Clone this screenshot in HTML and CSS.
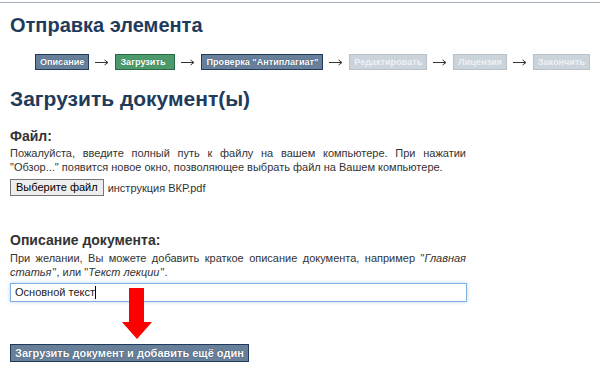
FILE: index.html
```html
<!DOCTYPE html>
<html lang="ru">
<head>
<meta charset="utf-8">
<title>Отправка элемента</title>
<link rel="stylesheet" href="styles.css">
</head>
<body>
<div class="topline"></div>
<div class="page">
  <h1 class="title">Отправка элемента</h1>
  <div class="steps">
    <span class="step step-done">Описание</span>
    <svg class="arrow" width="14" height="7" viewBox="0 0 14 7"><path d="M0 3.5H12.5M9.5 1L13 3.5L9.5 6" fill="none" stroke="#333" stroke-width="1"/></svg>
    <span class="step step-current">Загрузить</span>
    <svg class="arrow" width="14" height="7" viewBox="0 0 14 7"><path d="M0 3.5H12.5M9.5 1L13 3.5L9.5 6" fill="none" stroke="#333" stroke-width="1"/></svg>
    <span class="step step-done">Проверка "Антиплагиат"</span>
    <svg class="arrow" width="14" height="7" viewBox="0 0 14 7"><path d="M0 3.5H12.5M9.5 1L13 3.5L9.5 6" fill="none" stroke="#333" stroke-width="1"/></svg>
    <span class="step step-todo">Редактировать</span>
    <svg class="arrow" width="14" height="7" viewBox="0 0 14 7"><path d="M0 3.5H12.5M9.5 1L13 3.5L9.5 6" fill="none" stroke="#333" stroke-width="1"/></svg>
    <span class="step step-todo">Лицензия</span>
    <svg class="arrow" width="14" height="7" viewBox="0 0 14 7"><path d="M0 3.5H12.5M9.5 1L13 3.5L9.5 6" fill="none" stroke="#333" stroke-width="1"/></svg>
    <span class="step step-todo">Закончить</span>
  </div>

  <h2 class="subtitle">Загрузить документ(ы)</h2>

  <div class="field">
    <div class="label">Файл:</div>
    <p class="hint hint-file">Пожалуйста, введите полный путь к файлу на вашем компьютере. При нажатии "Обзор..." появится новое окно, позволяющее выбрать файл на Вашем компьютере.</p>
    <div class="file-row">
      <button class="file-btn" type="button">Выберите файл</button>
      <span class="file-name">инструкция ВКР.pdf</span>
    </div>
  </div>

  <div class="field field-desc">
    <div class="label">Описание документа:</div>
    <p class="hint">При желании, Вы можете добавить краткое описание документа, например "<i>Главная статья</i>", или "<i>Текст лекции</i>".</p>
    <div class="input-wrap">
      <div class="text-input">Основной текст<span class="caret"></span></div>
      <svg class="red-arrow" width="30" height="52" viewBox="0 0 30 52">
        <polygon points="7,0 22,0 22,34 30,34 15,51 0,34 7,34" fill="#ff0000"/>
      </svg>
    </div>
  </div>

  <button class="submit" type="button">Загрузить документ и добавить ещё один</button>
</div>
</body>
</html>
```

FILE: styles.css
```css
html, body {
  margin: 0;
  padding: 0;
  background: #ffffff;
}
body {
  font-family: "Liberation Sans", Arial, sans-serif;
  color: #333333;
}
.topline {
  margin-top: 2px;
  height: 1px;
  background: #a3afbb;
}
.page {
  padding: 0 10px;
}
.title {
  margin: 0;
  padding-top: 10px;
  font-size: 20px;
  line-height: 24px;
  font-weight: bold;
  color: #1f3b5c;
}
.steps {
  display: flex;
  justify-content: flex-end;
  align-items: center;
  margin-top: 17px;
  height: 16px;
}
.step {
  box-sizing: border-box;
  height: 16px;
  line-height: 14px;
  padding: 0 4px;
  font-size: 9.1px;
  font-weight: bold;
  color: #ffffff;
  border: 1px solid;
  white-space: nowrap;
}
.step-done {
  background: #687f99;
  border-color: #1f3a5a;
  text-shadow: 0 0 1px #1f3a5a;
}
.step-current {
  background: #4c9a6b;
  border-color: #2a6a45;
  text-shadow: 0 0 1px #2a6a45;
  padding-right: 9px;
}
.step-todo {
  background: #cbd3db;
  border-color: #b9c2cb;
  color: #eef1f4;
}
.arrow {
  display: block;
  margin: 0 6px;
  flex: none;
}
.subtitle {
  margin: 0;
  padding-top: 17px;
  font-size: 21px;
  line-height: 24px;
  font-weight: bold;
  color: #1f3b5c;
}
.field {
  width: 456px;
}
.label {
  margin-top: 17px;
  font-size: 14px;
  line-height: 16px;
  font-weight: bold;
  color: #333333;
}
.hint {
  margin: 3px 0 0;
  font-size: 11px;
  line-height: 14px;
  text-align: justify;
  color: #333333;
}
.hint i {
  padding-right: 1px;
}
.hint-file {
  margin-top: 2px;
}
.file-row {
  display: flex;
  align-items: center;
  margin-top: 5px;
}
.file-btn {
  box-sizing: border-box;
  height: 17px;
  padding: 0 5px;
  font-family: "Liberation Sans", Arial, sans-serif;
  font-size: 11px;
  line-height: 15px;
  color: #000000;
  background: #eeeeee;
  border: 1px solid #767676;
  border-radius: 0;
}
.file-name {
  margin-left: 4px;
  font-size: 11px;
  color: #333333;
}
.field-desc .label {
  margin-top: 36px;
}
.input-wrap {
  position: relative;
  margin-top: 4px;
}
.text-input {
  box-sizing: border-box;
  height: 19px;
  width: 457px;
  padding: 0 4px;
  font-size: 11px;
  line-height: 17px;
  color: #222222;
  border: 1px solid #7fb0e0;
  box-shadow: 0 0 4px rgba(102, 160, 220, 0.45);
  background: #ffffff;
}
.caret {
  display: inline-block;
  width: 1px;
  height: 13px;
  background: #000000;
  vertical-align: -3px;
}
.red-arrow {
  position: absolute;
  left: 112px;
  top: 5px;
}
.submit {
  box-sizing: border-box;
  margin-top: 42px;
  height: 18px;
  padding: 0 4px;
  font-family: "Liberation Sans", Arial, sans-serif;
  font-size: 11px;
  font-weight: bold;
  line-height: 16px;
  color: #ffffff;
  background: #687f99;
  border: 1px solid #1f3a5a;
  text-shadow: 0 0 1px #1f3a5a;
}
```
